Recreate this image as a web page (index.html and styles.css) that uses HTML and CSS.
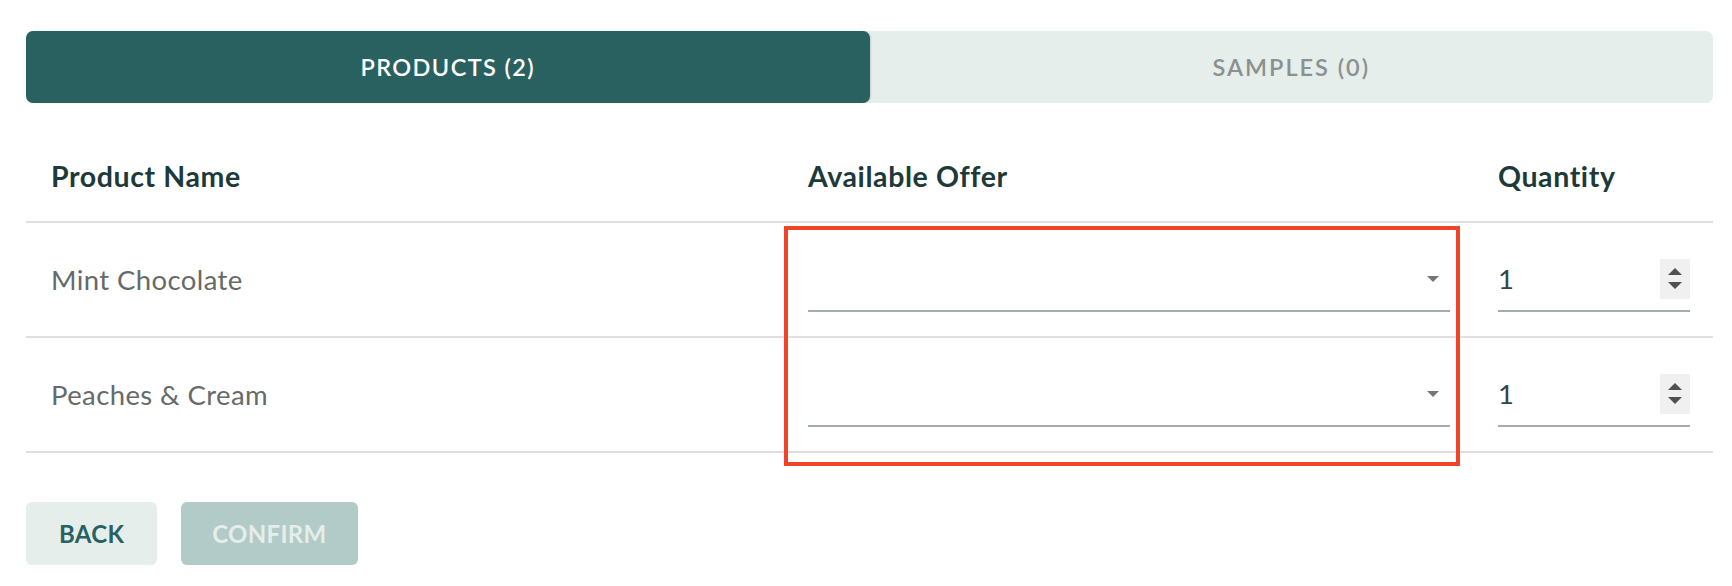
FILE: index.html
```html
<!DOCTYPE html>
<html lang="en">
<head>
<meta charset="utf-8">
<title>Order products</title>
<link rel="stylesheet" href="styles.css">
</head>
<body>
<div class="page">
  <div class="tabs">
    <div class="tab tab-active">PRODUCTS (2)</div>
    <div class="tab">SAMPLES (0)</div>
  </div>

  <div class="table">
    <div class="row row-head">
      <div class="cell c1">Product Name</div>
      <div class="cell c2">Available Offer</div>
      <div class="cell c3">Quantity</div>
    </div>
    <div class="row">
      <div class="cell c1">Mint Chocolate</div>
      <div class="cell c2">
        <div class="select"><span class="caret"></span></div>
      </div>
      <div class="cell c3">
        <div class="qty"><span class="qty-val">1</span><span class="spin"><span class="up"></span><span class="down"></span></span></div>
      </div>
    </div>
    <div class="row">
      <div class="cell c1">Peaches &amp; Cream</div>
      <div class="cell c2">
        <div class="select"><span class="caret"></span></div>
      </div>
      <div class="cell c3">
        <div class="qty"><span class="qty-val">1</span><span class="spin"><span class="up"></span><span class="down"></span></span></div>
      </div>
    </div>
    <div class="highlight"></div>
  </div>

  <div class="actions">
    <button class="btn btn-back">BACK</button>
    <button class="btn btn-confirm">CONFIRM</button>
  </div>
</div>
</body>
</html>
```

FILE: styles.css
```css
html, body {
  margin: 0;
  padding: 0;
  background: #ffffff;
}

body {
  font-family: Lato, "Open Sans", "Liberation Sans", sans-serif;
}

.page {
  width: 1687px;
  padding: 31px 0 0 26px;
}

.tabs {
  display: flex;
  height: 72px;
  background: #e5eeeb;
  border-radius: 7px;
}

.tab {
  flex: 1 1 0;
  display: flex;
  align-items: center;
  justify-content: center;
  font-size: 23.5px;
  font-weight: 600;
  letter-spacing: 1.4px;
  color: #8b918f;
  border-radius: 7px;
}

.tab:not(.tab-active) {
  letter-spacing: 2px;
}

.tab-active {
  background: #296060;
  color: #ffffff;
  box-shadow: 1px 0 2px rgba(0, 0, 0, 0.12);
}

.table {
  position: relative;
  margin-top: 32px;
}

.row {
  display: grid;
  grid-template-columns: 757px 690px 240px;
  height: 113px;
  border-bottom: 2px solid #e0e0e0;
}

.row-head {
  height: 86px;
}

.cell {
  display: flex;
  align-items: center;
  padding: 0 23px 0 25px;
  font-size: 27.5px;
  letter-spacing: 0.4px;
  color: #666a69;
}

.row-head .cell {
  font-size: 28.5px;
  font-weight: 700;
  letter-spacing: 0.6px;
  color: #1d3a3a;
  padding-bottom: 4px;
}

.select {
  position: relative;
  flex: 1;
  height: 62px;
  border-bottom: 2px solid #a3aeac;
}

.caret {
  position: absolute;
  right: 11px;
  top: 28px;
  width: 0;
  height: 0;
  border-left: 6px solid transparent;
  border-right: 6px solid transparent;
  border-top: 6px solid #767676;
}

.qty {
  position: relative;
  flex: 1;
  height: 62px;
  border-bottom: 2px solid #a3aeac;
  display: flex;
  align-items: center;
  justify-content: space-between;
}

.qty-val {
  color: #354545;
  font-size: 27.5px;
}

.spin {
  width: 30px;
  height: 40px;
  background: #f0f0f0;
  display: flex;
  flex-direction: column;
  align-items: center;
  justify-content: center;
  gap: 7px;
}

.up {
  width: 0;
  height: 0;
  border-left: 7px solid transparent;
  border-right: 7px solid transparent;
  border-bottom: 7px solid #505050;
}

.down {
  width: 0;
  height: 0;
  border-left: 7px solid transparent;
  border-right: 7px solid transparent;
  border-top: 7px solid #505050;
}

.highlight {
  position: absolute;
  left: 758px;
  top: 91px;
  width: 676px;
  height: 240px;
  box-sizing: border-box;
  border: 4.5px solid #ee4529;
  pointer-events: none;
}

.actions {
  display: flex;
  gap: 24px;
  margin-top: 49px;
}

.btn {
  height: 63px;
  padding: 0 33px;
  border: none;
  border-radius: 6px;
  font-family: Lato, "Open Sans", "Liberation Sans", sans-serif;
  font-size: 24px;
  font-weight: 700;
  letter-spacing: 0.3px;
}

.btn-back {
  background: #e5eeeb;
  color: #296060;
}

.btn-confirm {
  background: #b2cbc8;
  color: #e4eeeb;
  padding: 0 31px;
}
```
